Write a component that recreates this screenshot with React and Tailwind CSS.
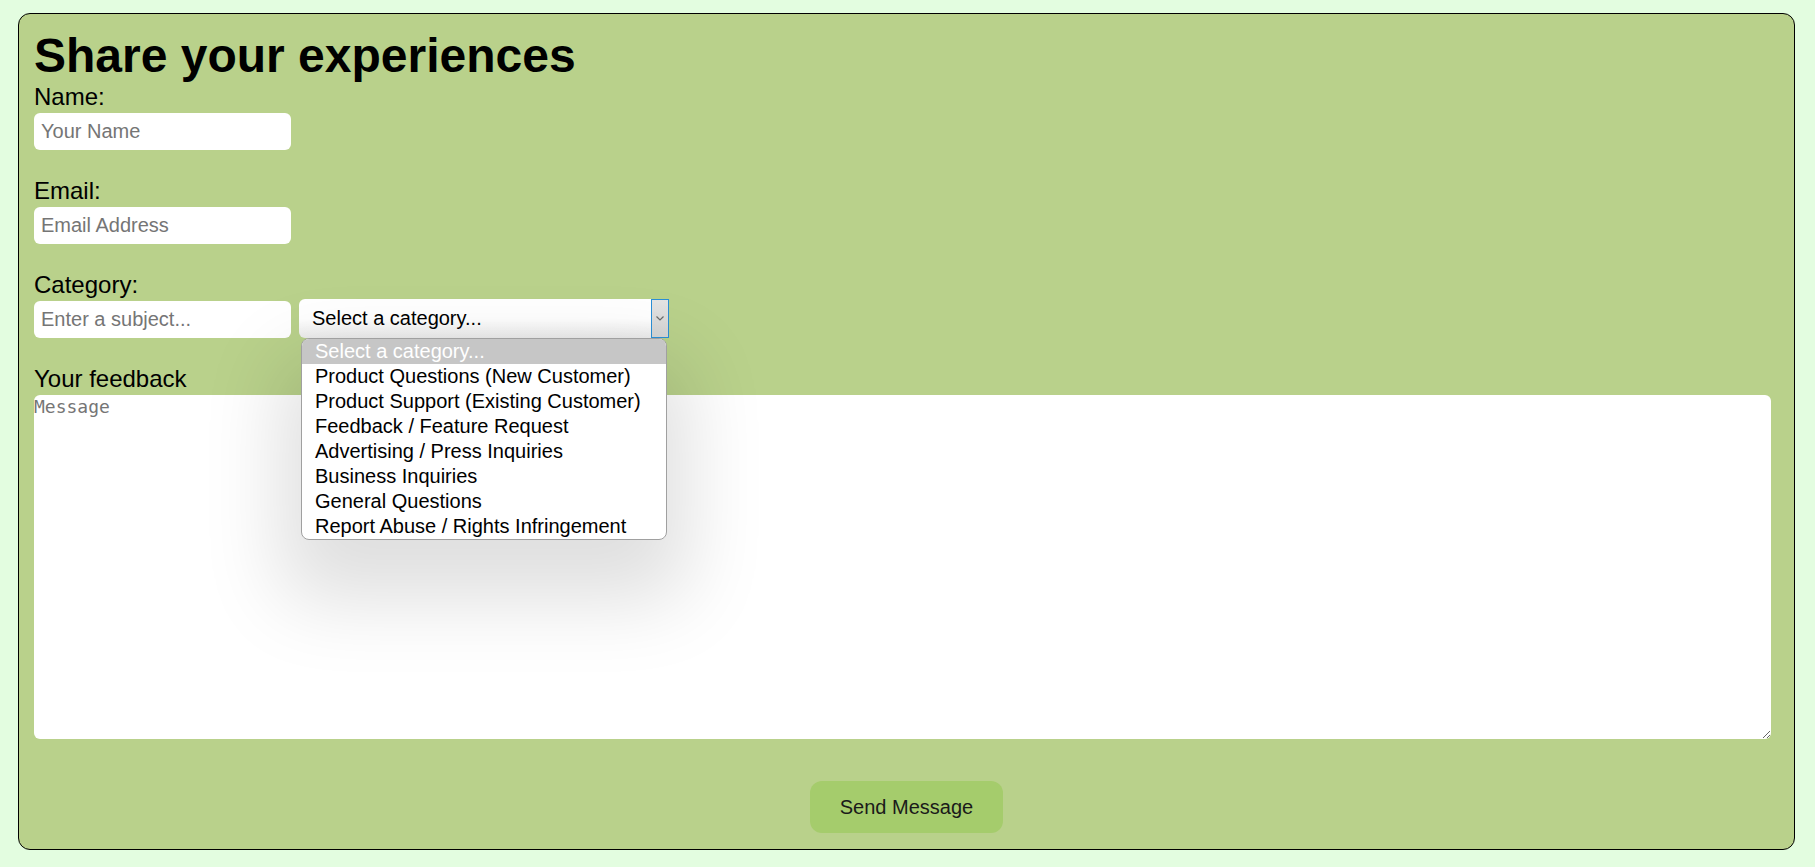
import React, { useState } from 'react';

const categories = [
  'Product Questions (New Customer)',
  'Product Support (Existing Customer)',
  'Feedback / Feature Request',
  'Advertising / Press Inquiries',
  'Business Inquiries',
  'General Questions',
  'Report Abuse / Rights Infringement',
];

const inputClass = 'block w-[257px] h-[37px] mt-[2px] px-[7px] rounded-[6px] bg-white text-[20px] text-black placeholder:text-[#757575] outline-none';

const App = () => {
  const [isOpen, setIsOpen] = useState(true);

  return (
    <div className="min-h-screen bg-[#e3fde0] pt-[13px] font-['Liberation_Sans',Arial,sans-serif] text-black">
      <div className="ml-[18px] w-[1777px] h-[837px] border border-black rounded-[12px] bg-[#b9d18b] px-[15px] pt-[14px] flex flex-col">
        <h1 className="text-[48px] leading-[55px] font-bold">Share your experiences</h1>

        <label className="text-[24px] leading-[28px]">Name:</label>
        <input type="text" placeholder="Your Name" className={inputClass} />

        <label className="mt-[27px] text-[24px] leading-[28px]">Email:</label>
        <input type="email" placeholder="Email Address" className={inputClass} />

        <label className="mt-[27px] text-[24px] leading-[28px]">Category:</label>
        <div className="flex items-end gap-[8px]">
          <input type="text" placeholder="Enter a subject..." className={inputClass} />
          {/* open select, drawn by hand so the list shows */}
          <div className="relative">
            <button
              type="button"
              onClick={() => setIsOpen(!isOpen)}
              className="flex items-stretch w-[370px] h-[39px] rounded-l-[6px] bg-linear-to-b from-white from-50% to-[#ebebeb] text-left"
            >
              <span className="flex-1 pl-[13px] text-[20px] leading-[39px] text-black">Select a category...</span>
              <span className="flex items-center justify-center w-[18px] border border-[#2b8fd6] bg-linear-to-b from-[#e4e4e4] to-[#d4d4d4]">
                <svg width="8" height="5" viewBox="0 0 8 5" fill="none">
                  <path d="M0.5 0.5 L4 4 L7.5 0.5" stroke="#6b6b6b" strokeWidth="1.2" />
                </svg>
              </span>
            </button>
            {isOpen && (
              <ul className="absolute left-[2px] top-[39px] z-10 w-[366px] border border-[#a0a0a0] rounded-[8px] bg-white overflow-hidden shadow-[0_40px_80px_20px_rgba(0,0,0,0.13)]">
                <li className="h-[25px] pl-[13px] text-[20px] leading-[25px] text-white bg-[#c6c6c6]">Select a category...</li>
                {categories.map(c => (
                  <li key={c} className="h-[25px] pl-[13px] text-[20px] leading-[25px] text-black">{c}</li>
                ))}
              </ul>
            )}
          </div>
        </div>

        <label className="mt-[27px] text-[24px] leading-[28px]">Your feedback</label>
        <textarea
          placeholder="Message"
          className="block w-[1737px] h-[344px] mt-[2px] pt-px rounded-[6px] bg-white font-['DejaVu_Sans_Mono',monospace] text-[18px] leading-[21px] placeholder:text-[#757575] outline-none"
        ></textarea>

        <button type="button" className="self-center mt-[42px] w-[193px] h-[52px] rounded-[12px] bg-[#a5cc6c] text-[20px] text-[#1a1a1a]">
          Send Message
        </button>
      </div>
    </div>
  );
};

export default App;
